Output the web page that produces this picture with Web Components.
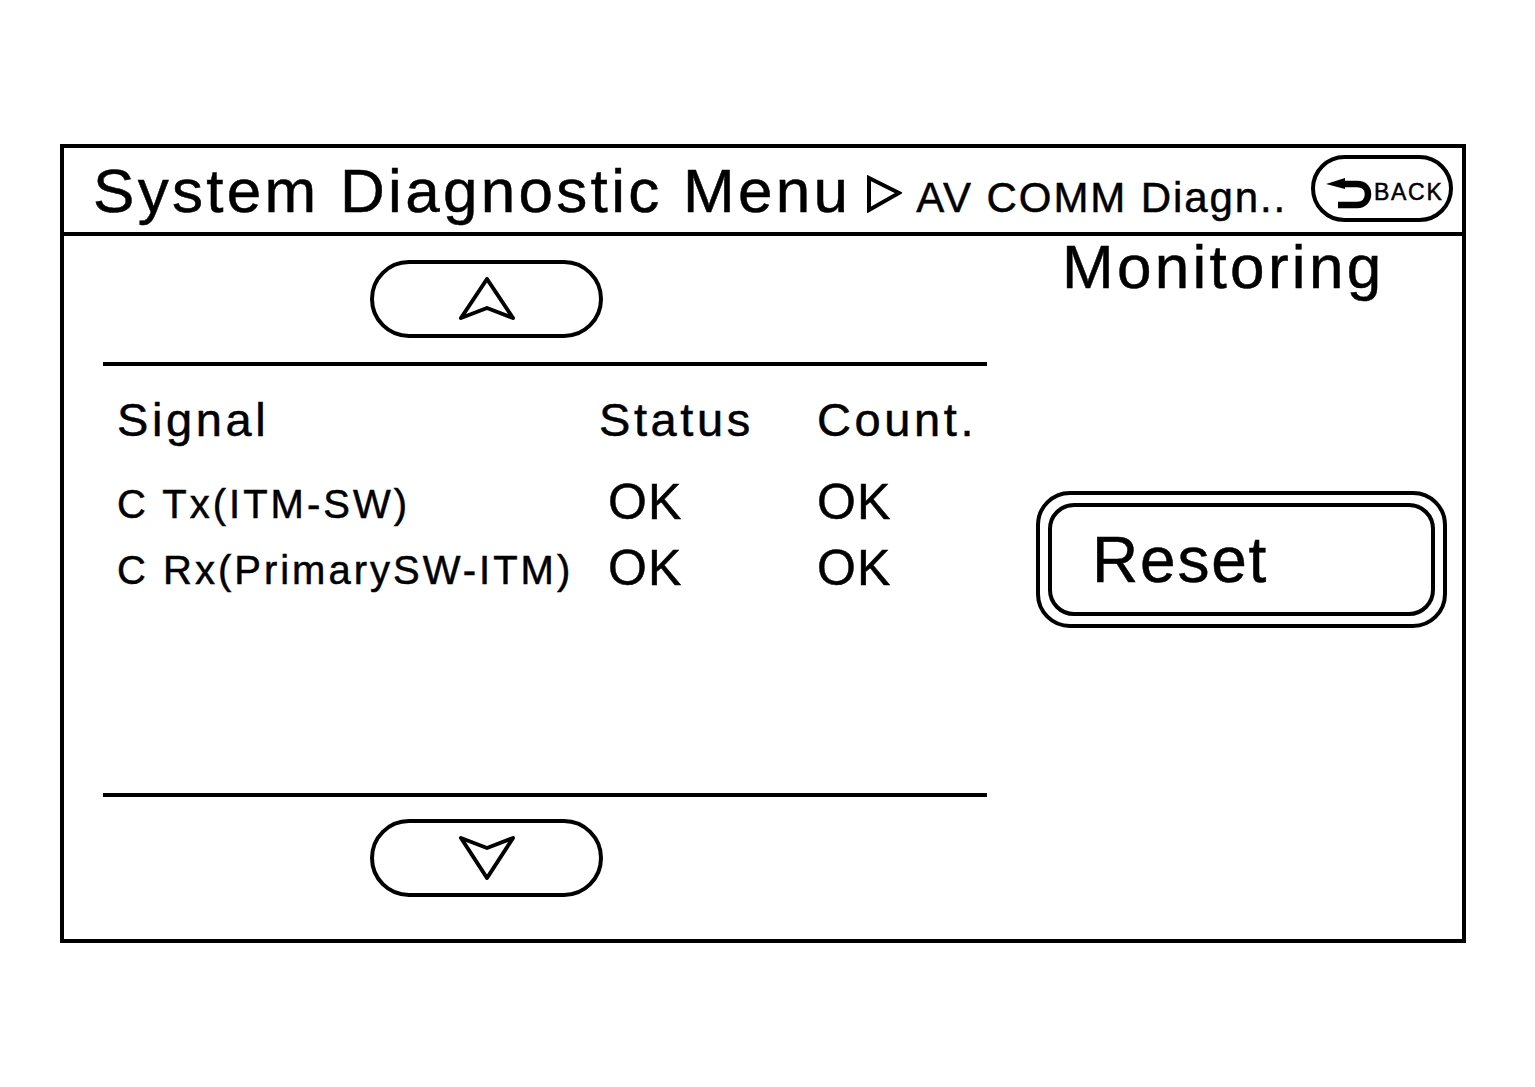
<!DOCTYPE html>
<html>
<head>
<meta charset="utf-8">
<title>System Diagnostic Menu</title>
<style>
  html, body { margin: 0; background: #fff; color: #000; }
  body {
    padding: 144px 0 0 60px;
    font-family: "Liberation Sans", Arial, sans-serif;
    -webkit-text-stroke: 0.5px #000;
  }
</style>
</head>
<body>
<diag-frame>
  <diag-header slot="header" title-text="System Diagnostic Menu" crumb="AV COMM Diagn.."></diag-header>
  <scroll-button slot="list" dir="up"></scroll-button>
  <signal-table slot="list">
    <signal-row name="Signal" status="Status" count="Count." head></signal-row>
    <signal-row name="C Tx(ITM-SW)" status="OK" count="OK"></signal-row>
    <signal-row name="C Rx(PrimarySW-ITM)" status="OK" count="OK"></signal-row>
  </signal-table>
  <scroll-button slot="list" dir="down"></scroll-button>
  <span slot="side-title">Monitoring</span>
  <reset-button slot="side">Reset</reset-button>
</diag-frame>

<script>
class DiagFrame extends HTMLElement {
  constructor() {
    super();
    this.attachShadow({ mode: 'open' });
    this.shadowRoot.innerHTML = `
      <style>
        :host {
          display: flex;
          flex-direction: column;
          box-sizing: border-box;
          width: 1406px;
          height: 799px;
          border: 4px solid #000;
        }
        .body {
          flex: 1;
          display: grid;
          grid-template-columns: 884px 411px;
          column-gap: 49px;
          padding-left: 39px;
        }
        .list {
          display: flex;
          flex-direction: column;
        }
        .side {
          display: flex;
          flex-direction: column;
        }
        .side-title {
          font-size: 62px;
          letter-spacing: 3.3px;
          line-height: 68px;
          margin: -3px 0 0 26px;
        }
        .side-content {
          margin-top: 190px;
        }
      </style>
      <slot name="header"></slot>
      <div class="body">
        <div class="list"><slot name="list"></slot></div>
        <div class="side">
          <div class="side-title"><slot name="side-title"></slot></div>
          <div class="side-content"><slot name="side"></slot></div>
        </div>
      </div>
    `;
  }
}

class DiagHeader extends HTMLElement {
  constructor() {
    super();
    this.attachShadow({ mode: 'open' });
    this.shadowRoot.innerHTML = `
      <style>
        :host {
          display: flex;
          align-items: center;
          box-sizing: border-box;
          height: 88px;
          padding: 0 9px 0 29px;
          border-bottom: 4px solid #000;
        }
        .title {
          font-size: 62px;
          letter-spacing: 3.3px;
          white-space: nowrap;
        }
        svg.crumb-arrow {
          flex: none;
          width: 36px;
          height: 38px;
          margin: 8px 0 0 15px;
        }
        .crumb {
          font-size: 42px;
          letter-spacing: 1.9px;
          white-space: nowrap;
          margin: 16px 0 0 14px;
        }
        back-button {
          margin-left: auto;
        }
      </style>
      <span class="title"></span>
      <svg class="crumb-arrow" viewBox="0 0 36 38">
        <path d="M3 3 L33 18 L3 35 Z" fill="none" stroke="#000" stroke-width="4" stroke-linejoin="miter"/>
      </svg>
      <span class="crumb"></span>
      <back-button></back-button>
    `;
  }

  connectedCallback() {
    this.shadowRoot.querySelector('.title').textContent = this.getAttribute('title-text');
    this.shadowRoot.querySelector('.crumb').textContent = this.getAttribute('crumb');
  }
}

class BackButton extends HTMLElement {
  constructor() {
    super();
    this.attachShadow({ mode: 'open' });
    this.shadowRoot.innerHTML = `
      <style>
        :host {
          display: flex;
          align-items: center;
          flex: none;
          box-sizing: border-box;
          width: 142px;
          height: 67px;
          border: 4px solid #000;
          border-radius: 34px;
          margin-top: -3px;
          padding-left: 11px;
        }
        svg {
          flex: none;
          width: 48px;
          height: 40px;
          margin-top: 8px;
        }
        span {
          font-size: 23px;
          letter-spacing: 1.7px;
          margin-top: 8px;
        }
      </style>
      <svg viewBox="0 0 48 40">
        <path d="M0 11 L19 5 L19 16 Z" fill="#000"/>
        <path d="M15 11 H31 C39 11 42 16 42 21 C42 27 38 32 31 32 H12" fill="none" stroke="#000" stroke-width="6.5"/>
      </svg>
      <span>BACK</span>
    `;
  }
}

class ScrollButton extends HTMLElement {
  constructor() {
    super();
    this.attachShadow({ mode: 'open' });
    this.shadowRoot.innerHTML = `
      <style>
        :host {
          display: flex;
          align-items: center;
          justify-content: center;
          box-sizing: border-box;
          width: 233px;
          height: 78px;
          border: 4px solid #000;
          border-radius: 39px;
          margin-left: 267px;
          margin-top: 24px;
        }
        :host([dir="down"]) {
          margin-top: 22px;
        }
        svg {
          width: 60px;
          height: 48px;
        }
      </style>
      <svg viewBox="0 0 60 48"></svg>
    `;
  }

  connectedCallback() {
    const up = this.getAttribute('dir') === 'up';
    const d = up ? 'M30 4 L4 43 L30 33 L56 43 Z' : 'M4 4 L30 14 L56 4 L30 44 Z';
    this.shadowRoot.querySelector('svg').innerHTML =
      `<path d="${d}" fill="none" stroke="#000" stroke-width="4" stroke-linejoin="round"/>`;
  }
}

class SignalTable extends HTMLElement {
  constructor() {
    super();
    this.attachShadow({ mode: 'open' });
    this.shadowRoot.innerHTML = `
      <style>
        :host {
          display: block;
          box-sizing: border-box;
          height: 435px;
          margin-top: 24px;
          border-top: 4px solid #000;
          border-bottom: 4px solid #000;
          padding: 22px 0 0 14px;
        }
      </style>
      <slot></slot>
    `;
  }
}

class SignalRow extends HTMLElement {
  constructor() {
    super();
    this.attachShadow({ mode: 'open' });
    this.shadowRoot.innerHTML = `
      <style>
        :host {
          display: grid;
          grid-template-columns: 482px 218px 1fr;
          height: 66px;
          align-items: center;
        }
        :host([head]) {
          height: 62px;
          margin-bottom: 19px;
        }
        span {
          white-space: nowrap;
        }
        .name {
          font-size: 40px;
          letter-spacing: 3px;
          padding-top: 4px;
        }
        .status { padding-left: 9px; }
        .status, .count {
          font-size: 50px;
          letter-spacing: 1.2px;
        }
        :host([head]) .name, :host([head]) .status, :host([head]) .count {
          font-size: 47px;
          letter-spacing: 3.6px;
          padding-top: 0;
        }
        :host([head]) .status { padding-left: 0; }
      </style>
      <span class="name"></span>
      <span class="status"></span>
      <span class="count"></span>
    `;
  }

  connectedCallback() {
    for (const key of ['name', 'status', 'count']) {
      this.shadowRoot.querySelector('.' + key).textContent = this.getAttribute(key);
    }
  }
}

class ResetButton extends HTMLElement {
  constructor() {
    super();
    this.attachShadow({ mode: 'open' });
    this.shadowRoot.innerHTML = `
      <style>
        :host {
          display: block;
          box-sizing: border-box;
          width: 411px;
          height: 137px;
          border: 4px solid #000;
          border-radius: 34px;
          padding: 8px;
        }
        .inner {
          box-sizing: border-box;
          height: 100%;
          display: flex;
          align-items: center;
          border: 4px solid #000;
          border-radius: 26px;
          padding-left: 40px;
          font-size: 64px;
          letter-spacing: 1.8px;
        }
      </style>
      <div class="inner"><slot></slot></div>
    `;
  }
}

customElements.define('back-button', BackButton);
customElements.define('diag-header', DiagHeader);
customElements.define('diag-frame', DiagFrame);
customElements.define('scroll-button', ScrollButton);
customElements.define('signal-table', SignalTable);
customElements.define('signal-row', SignalRow);
customElements.define('reset-button', ResetButton);
</script>
</body>
</html>
